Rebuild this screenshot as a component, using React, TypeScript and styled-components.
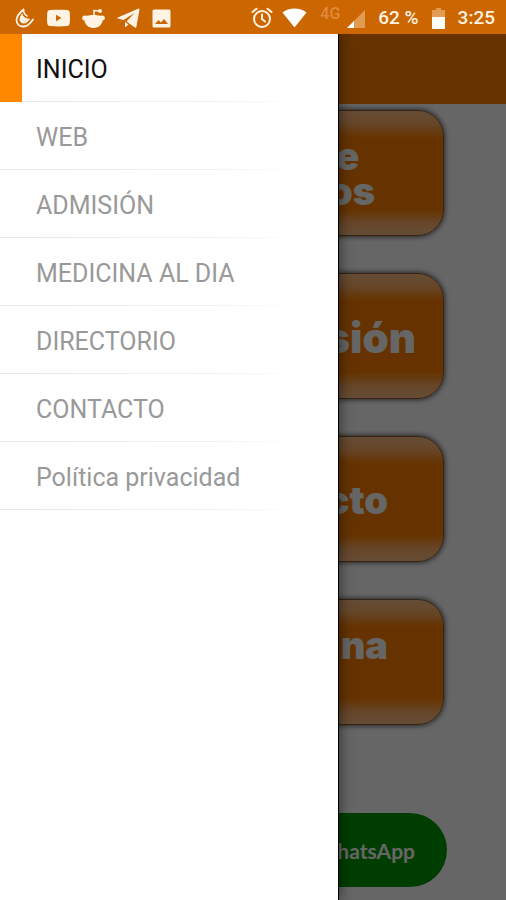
import React from "react";
import styled, { createGlobalStyle } from "styled-components";

const GlobalStyle = createGlobalStyle`
  *, *::before, *::after { box-sizing: border-box; }
  body { margin: 0; background: #fff; font-family: Roboto, "Liberation Sans", sans-serif; }
  button, a { font: inherit; }
`;

const Screen = styled.div`
  display: flex;
  flex-direction: column;
  min-height: 100vh;
`;

const StatusBar = styled.header`
  display: flex;
  align-items: center;
  justify-content: space-between;
  height: 34px;
  padding: 2px 11px 0 15px;
  background: #cc6600;
  color: #fff3e4;
  font-size: 19px;
  font-weight: 500;
  line-height: 24px;
  svg { display: block; flex: none; }
`;

const StatusGroup = styled.div<{ $gap: number }>`
  display: flex;
  align-items: center;
  gap: ${(p) => p.$gap}px;
`;

const Network = styled.div`
  display: flex;
  align-items: flex-end;
  gap: 7px;
  height: 24px;
  padding-bottom: 2px;
`;

const NetworkType = styled.span`
  align-self: flex-start;
  color: #e08a3c;
  font-size: 16px;
  line-height: 16px;
`;

const Stage = styled.div`
  position: relative;
  display: flex;
  flex: 1;
  flex-direction: column;
  overflow: hidden;
`;

const AppBar = styled.div`
  height: 70px;
  background: #ff8000;
`;

const Home = styled.main`
  display: flex;
  flex-direction: column;
  padding: 6px 62px 12px;
`;

const CardList = styled.nav`
  display: flex;
  flex-direction: column;
  gap: 37px;
`;

const Card = styled.button<{ $inset: number; $size: number }>`
  display: flex;
  align-items: center;
  justify-content: flex-end;
  height: 126px;
  padding: 2px ${(p) => p.$inset}px 0 0;
  border: 1px solid #84562c;
  border-radius: 26px;
  background: linear-gradient(#ffbf88 0, #ffb068 12px, #ff8000 27px, #ff8000 98px, #ffb068 112px, #ffbf88 100%);
  box-shadow: 0 0 5px 1px rgba(0, 0, 0, 0.6);
  color: #fff;
  font-family: Inter, "Liberation Sans", sans-serif;
  font-size: ${(p) => p.$size}px;
  font-weight: 900;
  line-height: 35px;
  text-align: center;
`;

const CardLabel = styled.span<{ $raised?: boolean }>`
  display: block;
  padding-bottom: ${(p) => (p.$raised ? 35 : 0)}px;
  white-space: pre-line;
`;

const WhatsAppLink = styled.a`
  display: flex;
  align-items: center;
  justify-content: flex-end;
  height: 74px;
  margin: 88px -3px 0 0;
  padding-right: 32px;
  border-radius: 37px;
  background: #009a00;
  color: #fff;
  font-family: Lato, "Liberation Sans", sans-serif;
  font-size: 21px;
  font-weight: 700;
  text-decoration: none;
`;

const Scrim = styled.div`
  position: absolute;
  inset: 0;
  background: rgba(0, 0, 0, 0.6);
`;

const Drawer = styled.aside`
  position: absolute;
  inset: 0 168px 0 0;
  background: #fff;
  box-shadow: 1px 0 0 #000, 2px 0 12px rgba(0, 0, 0, 0.5);
`;

const MenuList = styled.ul`
  margin: 0;
  padding: 0;
  list-style: none;
`;

const MenuItem = styled.li`
  height: 68px;
  background: linear-gradient(90deg, #e9e9e9, #f0f0f0 60%, #fff 90%) bottom / 100% 1px no-repeat;
`;

const MenuLink = styled.a<{ $active: boolean }>`
  display: flex;
  align-items: center;
  height: 100%;
  padding: 4px 0 0 36px;
  background: ${(p) => (p.$active ? "linear-gradient(#ff8800, #ff8800) left / 22px 100% no-repeat" : "none")};
  color: ${(p) => (p.$active ? "#111" : "#999")};
  font-size: 25px;
  line-height: 32px;
  text-decoration: none;
`;

const MENU = ["INICIO", "WEB", "ADMISIÓN", "MEDICINA AL DIA", "DIRECTORIO", "CONTACTO", "Política privacidad"];

const CARDS = [
  { label: "Cita de\nMédicos", inset: 68, size: 38 },
  { label: "Admisión", inset: 27, size: 42 },
  { label: "Contacto", inset: 55, size: 38 },
  { label: "Medicina", inset: 55, size: 38, raised: true },
];

const FlameIcon = () => (
  <svg width="20" height="20" viewBox="0 0 20 20" fill="none" stroke="#fff3e4" strokeLinecap="round" strokeLinejoin="round">
    <path d="M8.500 1.500C4.500 5 1.500 8.500 1.500 12c0 4 3 6.500 7 6.500 3.500 0 6.500-2.500 9.500-7" strokeWidth="1.800" />
    <path d="M7 6.500c-2 2.500-2.500 5-1.500 7 1.500 2 4.500 2 6.500.5 1-.8 1.800-1.800 2.500-3-3 .3-6-1-7.500-4.500z" fill="#fff3e4" strokeWidth="1" />
    <path d="M8.500 1.500c0 3 1 5 3.500 6.500" strokeWidth="1.500" />
  </svg>
);

const YoutubeIcon = () => (
  <svg width="23" height="18" viewBox="0 0 23 18">
    <path fill="#fff3e4" fillRule="evenodd" d="M3 1C8 .5 15 .5 20 1c1.500.2 2.500 1 2.700 2.500.4 3 .4 8 0 11-.2 1.500-1.200 2.300-2.700 2.500-5 .5-12 .5-17 0C1.500 16.800.5 16 .3 14.500c-.4-3-.4-8 0-11C.5 2 1.500 1.200 3 1zM9 5.800v6.400L14.500 9z" />
  </svg>
);

const RedditIcon = () => (
  <svg width="23" height="21" viewBox="0 0 23 21" fill="#fff3e4">
    <path d="M2 8.500C8 6.500 15 6.500 21 8.500c0 8-4 11.500-9.500 11.500S2 16.500 2 8.500z" />
    <circle cx="2.700" cy="10" r="2.500" />
    <circle cx="20.300" cy="10" r="2.500" />
    <circle cx="18" cy="3" r="2" />
    <path d="M12 8V2.500L17 3" fill="none" stroke="#fff3e4" strokeWidth="1.500" />
  </svg>
);

const TelegramIcon = () => (
  <svg width="23" height="20" viewBox="0 0 23 20" fill="#fff3e4">
    <path d="M.8 9.500 21 .7c1-.4 1.600.2 1.400 1.300L19.500 18.500c-.3 1.200-1 1.400-2 .8L9.500 13.500 17.500 5 6.500 12 .8 10.500c-.8-.3-.8-.7 0-1z" />
    <path d="M8 14l3.500 2.500L9 18.800c-.6.5-1 .3-1-.5z" />
  </svg>
);

const PictureIcon = () => (
  <svg width="19" height="19" viewBox="0 0 19 19">
    <path fill="#fff3e4" fillRule="evenodd" d="M2 .5h15A1.500 1.500 0 0 1 18.500 2v15a1.500 1.500 0 0 1-1.500 1.500H2A1.500 1.500 0 0 1 .5 17V2A1.500 1.500 0 0 1 2 .5zM3 15h13l-4-5-3 3.500L6.500 11z" />
  </svg>
);

const AlarmIcon = () => (
  <svg width="22" height="22" viewBox="0 0 22 22" fill="none" stroke="#fff3e4" strokeWidth="2" strokeLinecap="round">
    <circle cx="11" cy="12" r="8" />
    <path d="M11 7.500V12l3 2.500M1.500 5 5.500 1.700M20.500 5l-4-3.300" />
  </svg>
);

const WifiIcon = () => (
  <svg width="25" height="20" viewBox="0 0 25 20">
    <path fill="#fff" d="M12.500 19.500.5 4.500C7-.7 18-.7 24.500 4.500z" />
  </svg>
);

const SignalIcon = () => (
  <svg width="18" height="18" viewBox="0 0 18 18">
    <path fill="#e39a55" d="M18 0v18H0z" />
    <path fill="#fff" d="M7 11v7H0z" />
  </svg>
);

const BatteryIcon = () => (
  <svg width="13" height="21" viewBox="0 0 13 21">
    <path fill="#e39a55" d="M4 0h5v2h4v8H0V2h4z" />
    <path fill="#fff" d="M0 9h13v11a1 1 0 0 1-1 1H1a1 1 0 0 1-1-1z" />
  </svg>
);

export default function App() {
  return (
    <Screen>
      <GlobalStyle />
      <StatusBar>
        <StatusGroup $gap={12}>
          <FlameIcon />
          <YoutubeIcon />
          <RedditIcon />
          <TelegramIcon />
          <PictureIcon />
        </StatusGroup>
        <StatusGroup $gap={13}>
          <StatusGroup $gap={9}>
            <AlarmIcon />
            <WifiIcon />
          </StatusGroup>
          <Network>
            <NetworkType>4G</NetworkType>
            <SignalIcon />
          </Network>
          <span>62 %</span>
          <BatteryIcon />
          <span>3:25</span>
        </StatusGroup>
      </StatusBar>
      <Stage>
        <AppBar />
        <Home>
          <CardList>
            {CARDS.map((card) => (
              <Card key={card.label} type="button" $inset={card.inset} $size={card.size}>
                <CardLabel $raised={card.raised}>{card.label}</CardLabel>
              </Card>
            ))}
          </CardList>
          <WhatsAppLink href="#whatsapp">WhatsApp</WhatsAppLink>
        </Home>
        <Scrim />
        <Drawer>
          <nav aria-label="Menú">
            <MenuList>
              {MENU.map((item, index) => (
                <MenuItem key={item}>
                  <MenuLink href={`#${index}`} $active={index === 0} aria-current={index === 0 ? "page" : undefined}>
                    {item}
                  </MenuLink>
                </MenuItem>
              ))}
            </MenuList>
          </nav>
        </Drawer>
      </Stage>
    </Screen>
  );
}
